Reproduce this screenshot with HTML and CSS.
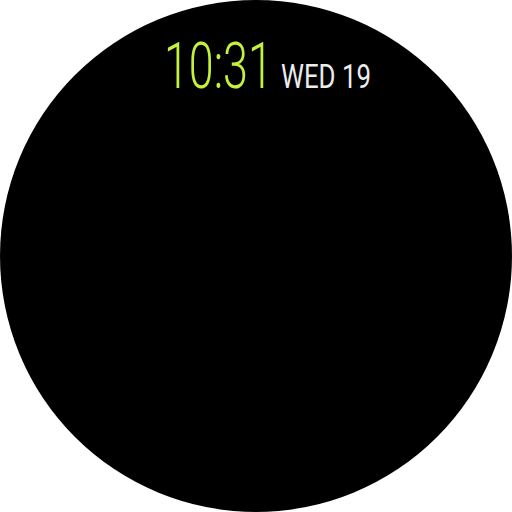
FILE: index.html
```html
<!DOCTYPE html>
<html>
<head>
<meta charset="utf-8">
<link rel="stylesheet" href="styles.css">
</head>
<body>
<div class="watch">
  <div class="status">
    <span class="time">10:31</span>
    <span class="date">WED 19</span>
  </div>
</div>
</body>
</html>
```
FILE: styles.css
```css
html, body {
  margin: 0;
  padding: 0;
  background: #ffffff;
}
.watch {
  width: 512px;
  height: 512px;
  border-radius: 50%;
  background: #000000;
  display: flex;
  flex-direction: column;
  font-family: Roboto, "Liberation Sans", sans-serif;
}
.status {
  margin-top: 35px;
  padding-left: 164px;
  display: flex;
  align-items: baseline;
}
.time {
  display: inline-block;
  font-size: 64px;
  font-weight: 300;
  color: #c4f23a;
  line-height: 1;
  transform: scaleX(0.70);
  transform-origin: left center;
  margin-right: -38px;
}
.date {
  display: inline-block;
  font-size: 34px;
  font-weight: 400;
  color: #ececec;
  line-height: 1;
  transform: scaleX(0.76);
  transform-origin: left center;
}
```
